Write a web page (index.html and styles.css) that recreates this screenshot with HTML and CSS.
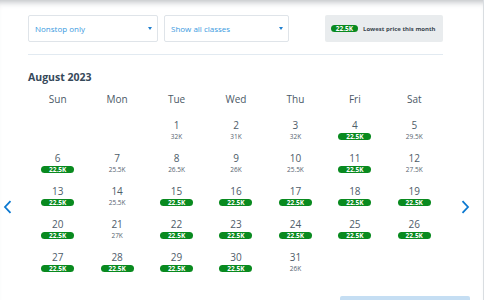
FILE: index.html
```html
<!DOCTYPE html>
<html lang="en">
  <head>
    <meta charset="UTF-8" />
    <meta name="viewport" content="width=device-width, initial-scale=1.0" />
    <title>Calendrier des prix</title>
    <link rel="stylesheet" href="styles.css">
  </head>
  <body>
    <div class="page">
      <div class="filters">
        <div class="selects">
          <div class="select select-stops">Nonstop only <span class="caret"></span></div>
          <div class="select select-class">Show all classes <span class="caret"></span></div>
        </div>
        <div class="legend">
          <span class="badge">22.5K</span>
          <span class="legend-text">Lowest price this month</span>
        </div>
      </div>

      <div class="calendar">
        <button class="nav nav-prev" aria-label="Previous month">
          <svg width="9" height="14" viewBox="0 0 9 14"><path d="M7.5 1.2 L2 7 L7.5 12.8" fill="none" stroke="#0b78d0" stroke-width="1.8"/></svg>
        </button>

        <div class="month">
          <h3 class="month-title">August 2023</h3>
          <div class="grid" id="grid">
            <div class="dow">Sun</div>
            <div class="dow">Mon</div>
            <div class="dow">Tue</div>
            <div class="dow">Wed</div>
            <div class="dow">Thu</div>
            <div class="dow">Fri</div>
            <div class="dow">Sat</div>
          </div>
        </div>

        <button class="nav nav-next" aria-label="Next month">
          <svg width="9" height="14" viewBox="0 0 9 14"><path d="M1.5 1.2 L7 7 L1.5 12.8" fill="none" stroke="#0b78d0" stroke-width="1.8"/></svg>
        </button>
      </div>

      <div class="footer">
        <div class="continue"></div>
      </div>
    </div>

    <script>
      // Prix par jour pour août 2023 (premier jour = mardi)
      const prix = ["32K", "31K", "32K", "22.5K", "29.5K",
        "22.5K", "25.5K", "26.5K", "26K", "25.5K", "22.5K", "27.5K",
        "22.5K", "25.5K", "22.5K", "22.5K", "22.5K", "22.5K", "22.5K",
        "22.5K", "27K", "22.5K", "22.5K", "22.5K", "22.5K", "22.5K",
        "22.5K", "22.5K", "22.5K", "22.5K", "26K"];
      const plusBas = "22.5K";
      const grid = document.getElementById("grid");

      for (let i = 0; i < 2; i++) {
        const vide = document.createElement("div");
        vide.className = "day empty";
        grid.appendChild(vide);
      }

      prix.forEach((p, i) => {
        const cell = document.createElement("div");
        cell.className = "day";
        const num = document.createElement("span");
        num.className = "num";
        num.textContent = i + 1;
        const price = document.createElement("span");
        price.className = p === plusBas ? "badge" : "price";
        price.textContent = p;
        cell.appendChild(num);
        cell.appendChild(price);
        grid.appendChild(cell);
      });
    </script>
  </body>
</html>
```

FILE: styles.css
```css
html, body {
  margin: 0;
  padding: 0;
  background: #fff;
}
body {
  font-family: "Open Sans", "Noto Sans", Arial, sans-serif;
  width: 488px;
  height: 300px;
  overflow: hidden;
}
.page {
  width: 484px;
  height: 300px;
  border-right: 1px solid #d9dde1;
  box-shadow: inset 0 7px 6px -5px rgba(60, 70, 80, 0.35);
  box-sizing: border-box;
  padding-top: 15px;
  position: relative;
}
.filters {
  display: flex;
  justify-content: space-between;
  margin: 0 40px 0 28px;
  padding-bottom: 12px;
  border-bottom: 1px solid #e2eaf1;
}
.selects {
  display: flex;
  gap: 6px;
}
.select {
  height: 27px;
  box-sizing: border-box;
  border: 1px solid #dfe4e9;
  border-radius: 2px;
  display: flex;
  align-items: center;
  justify-content: space-between;
  padding: 0 5px 0 6px;
  font-size: 8px;
  color: #3a9ae0;
}
.select-stops {
  width: 130px;
}
.select-class {
  width: 125px;
}
.caret {
  width: 0;
  height: 0;
  border-left: 2.5px solid transparent;
  border-right: 2.5px solid transparent;
  border-top: 3.5px solid #1f7fcf;
}
.legend {
  width: 118px;
  height: 27px;
  background: #e9ecee;
  border-radius: 2px;
  display: flex;
  align-items: center;
  gap: 5px;
  padding-left: 6px;
  box-sizing: border-box;
}
.legend .badge {
  width: 27px;
  flex-shrink: 0;
}
.legend-text {
  font-size: 6px;
  font-weight: 700;
  color: #3b4650;
  white-space: nowrap;
}
.badge {
  display: inline-block;
  width: 33px;
  height: 7px;
  line-height: 7px;
  border-radius: 4px;
  background: #098a1f;
  color: #fff;
  font-size: 6.5px;
  font-weight: 700;
  text-align: center;
}
.calendar {
  display: flex;
  align-items: flex-start;
}
.nav {
  border: none;
  background: none;
  padding: 0;
  margin-top: 145px;
  cursor: pointer;
  display: flex;
}
.nav-prev {
  width: 28px;
  padding-left: 3px;
}
.nav-next {
  padding-left: 17px;
}
.month {
  width: 416px;
}
.month-title {
  margin: 15px 0 0 0;
  font-size: 10.5px;
  line-height: 14px;
  font-weight: 700;
  color: #36495a;
}
.grid {
  display: grid;
  grid-template-columns: repeat(7, 1fr);
  margin-top: 8px;
}
.dow {
  font-size: 10px;
  line-height: 14px;
  color: #4b5966;
  text-align: center;
  margin-bottom: 13px;
}
.day {
  height: 33px;
  display: flex;
  flex-direction: column;
  align-items: center;
}
.num {
  font-size: 10px;
  line-height: 13px;
  color: #4e5c69;
}
.price {
  font-size: 6.5px;
  line-height: 8px;
  color: #55636f;
  margin-top: 1px;
}
.day .badge {
  margin-top: 1px;
}
.footer {
  position: absolute;
  left: 340px;
  bottom: 0;
}
.continue {
  width: 130px;
  height: 4px;
  background: #c5def3;
  border-radius: 2px 2px 0 0;
}
```
